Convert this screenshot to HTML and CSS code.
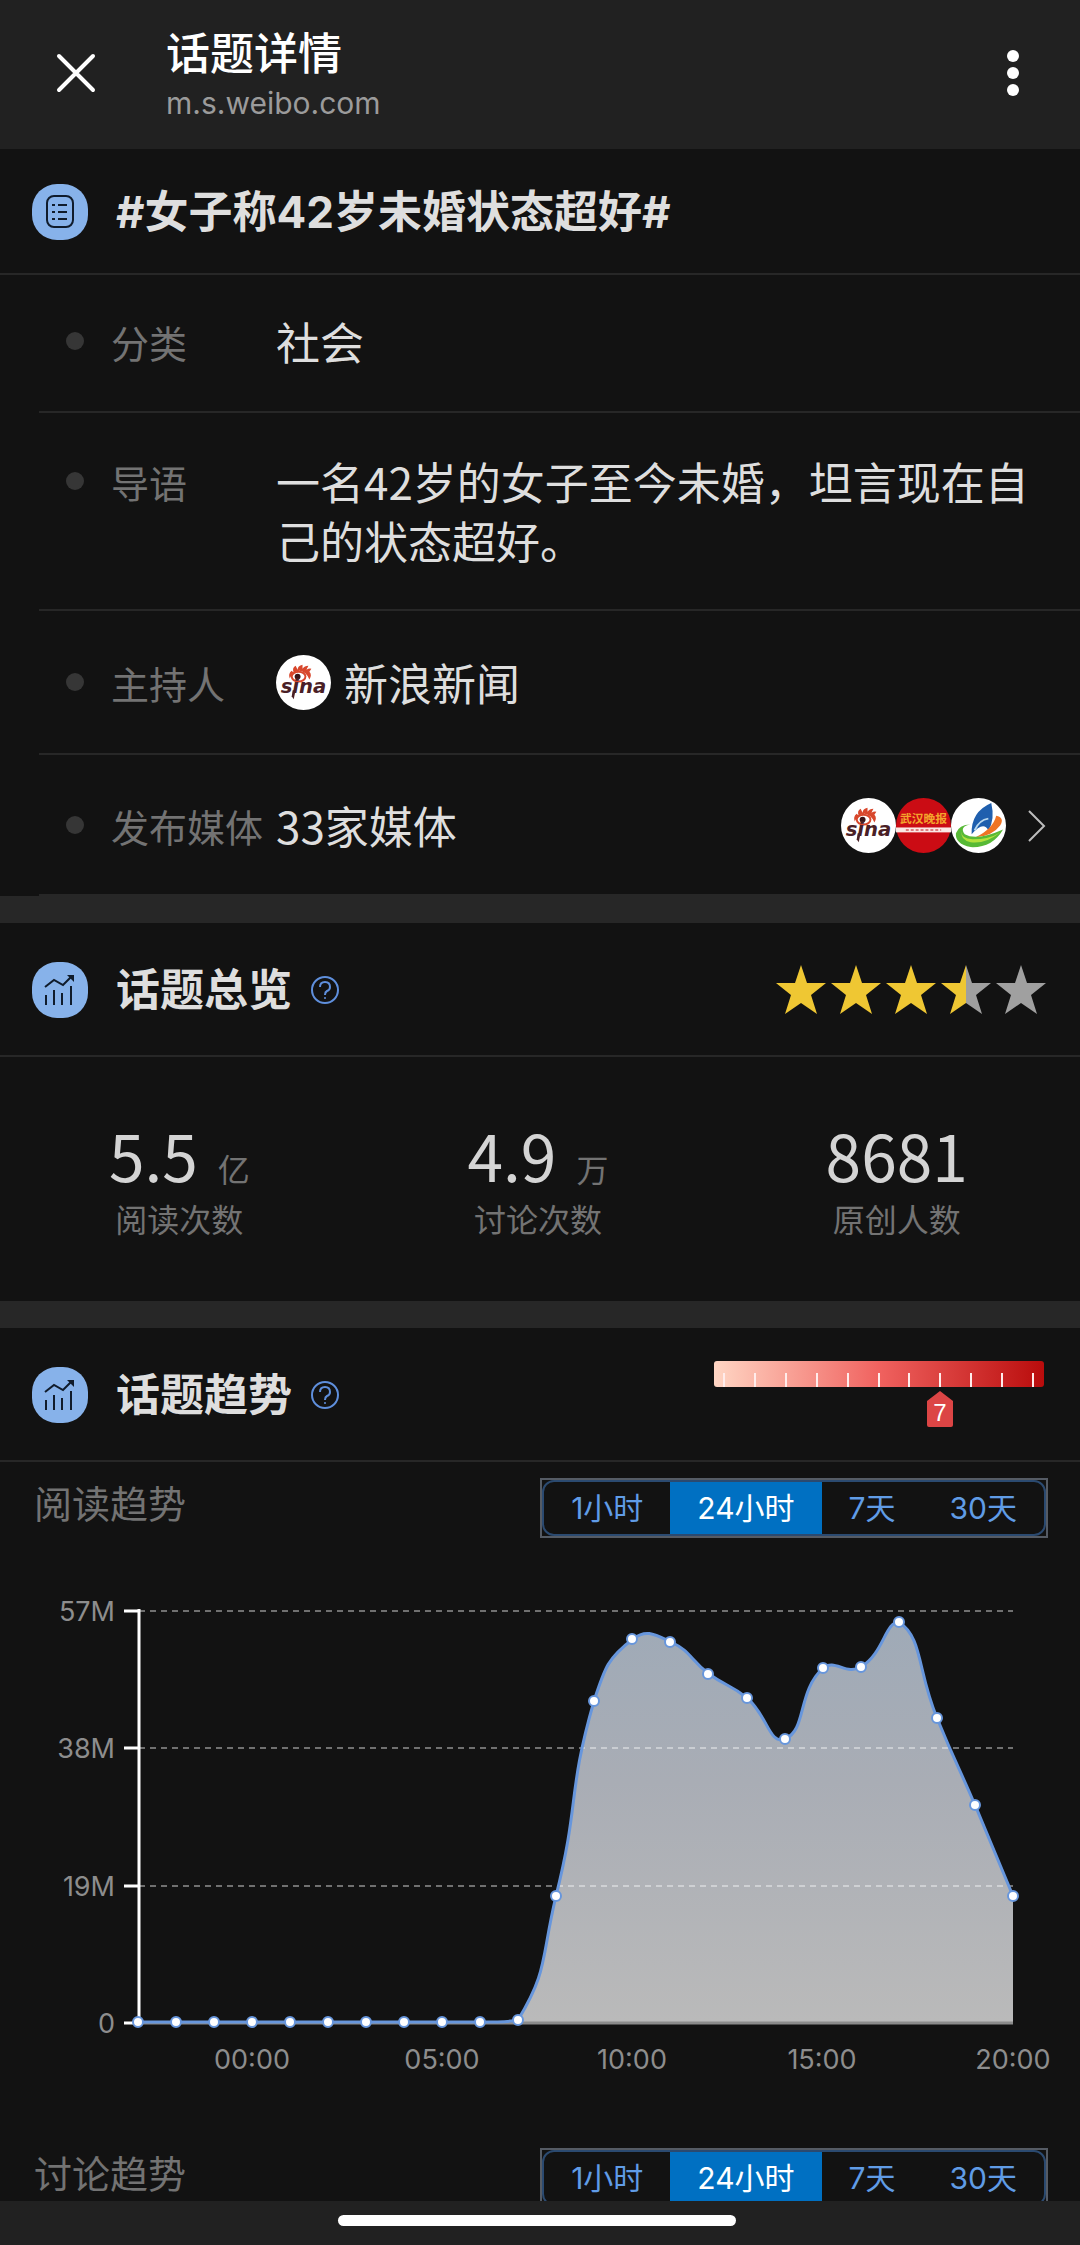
FILE: index.html
```html
<!DOCTYPE html>
<html lang="zh-CN">
<head>
<meta charset="utf-8">
<meta name="viewport" content="width=device-width, initial-scale=1">
<title>话题详情</title>
<link rel="stylesheet" href="styles.css">
</head>
<body>
<svg class="sprite" aria-hidden="true">
  <symbol id="sina" viewBox="0 0 56 56">
    <circle cx="28" cy="28" r="28" fill="#fff"/>
    <path d="M14 24 Q12 19 16 16 L18 18 Q16 13 20 11 L22 15 Q22 11 27 10 L27 14 Q29 11 33 11 L31 15 Q34 13 36 14 L34 17 Q37 20 34 25 Q31 17 24 16 Q17 17 14 24Z" fill="#d8472c"/>
    <ellipse cx="23" cy="22" rx="7" ry="5" fill="#fff" stroke="#d8472c" stroke-width="2"/>
    <circle cx="22" cy="22" r="3" fill="#3a1518"/>
    <text x="28" y="39" text-anchor="middle" class="sina-word">sina</text>
    <path d="M20 36 L18 45 L16 42 L17 36Z" fill="#4a2026"/>
  </symbol>
  <symbol id="trend" viewBox="0 0 56 56">
    <rect width="56" height="56" rx="25" fill="#87b2ea"/>
    <g fill="none" stroke="#101c2c" stroke-width="2">
      <path d="M13 25 L22 18 L31 23 L40 14"/>
      <path d="M14 33V43M22 28V43M30 31V43M39 24V43"/>
    </g>
    <path d="M35 13H42V20Z" fill="#101c2c"/>
  </symbol>
  <symbol id="help" viewBox="0 0 30 30">
    <circle cx="15" cy="15" r="13" fill="none" stroke="#5f8fdc" stroke-width="2"/>
    <path d="M10 12 Q10 7 15 7 Q20 7 20 12 Q20 15 17 16 Q15 17 15 20" fill="none" stroke="#5f8fdc" stroke-width="2"/>
    <circle cx="15" cy="23" r="1" fill="#5f8fdc"/>
  </symbol>
  <symbol id="star" viewBox="0 0 50 50">
    <path d="M25 0 L31 18 L50 18 L35 30 L41 49 L25 38 L9 49 L15 30 L0 18 L19 18Z"/>
  </symbol>
</svg>

<header class="topbar">
  <button class="icon-button" aria-label="关闭">
    <svg width="40" height="40" viewBox="0 0 40 40"><path d="M3 3 L37 37 M37 3 L3 37" stroke="#fff" stroke-width="4" stroke-linecap="round"/></svg>
  </button>
  <div class="topbar-text">
    <div class="topbar-title">话题详情</div>
    <div class="topbar-url">m.s.weibo.com</div>
  </div>
  <button class="icon-button" aria-label="更多">
    <svg width="14" height="46" viewBox="0 0 14 46" fill="#fff"><circle cx="7" cy="6" r="6"/><circle cx="7" cy="23" r="6"/><circle cx="7" cy="40" r="6"/></svg>
  </button>
</header>

<main class="content">
  <section>
    <div class="section-head section-head-first">
      <svg class="badge" viewBox="0 0 56 56" aria-hidden="true">
        <rect width="56" height="56" rx="25" fill="#87b2ea"/>
        <g fill="none" stroke="#101c2c" stroke-width="2">
          <rect x="15" y="12" width="26" height="31" rx="7"/>
          <path d="M26 21H35M26 28H35M26 35H35M20 21H23M20 28H23M20 35H23"/>
        </g>
      </svg>
      <h1 class="section-title">#女子称42岁未婚状态超好#</h1>
    </div>
    <dl class="details">
      <div class="row row-category">
        <dt>分类</dt><dd>社会</dd>
      </div>
      <div class="row row-intro">
        <dt>导语</dt><dd>一名42岁的女子至今未婚，坦言现在自己的状态超好。</dd>
      </div>
      <div class="row row-host">
        <dt>主持人</dt><dd class="host"><svg class="avatar" aria-hidden="true"><use href="#sina"/></svg>新浪新闻</dd>
      </div>
      <div class="row row-media">
        <dt>发布媒体</dt>
        <dd><a class="media" href="#media">33家媒体
          <span class="avatars">
            <svg class="avatar" aria-hidden="true"><use href="#sina"/></svg>
            <svg class="avatar" viewBox="0 0 56 56" aria-hidden="true">
              <circle cx="28" cy="28" r="28" fill="#cb0c14"/>
              <text x="28" y="25" text-anchor="middle" class="paper-name">武汉晚报</text>
              <rect x="0" y="30" width="56" height="5" fill="#fbe9e6"/>
              <path d="M10 32.500H46" stroke="#dc7f80" stroke-width="2" stroke-dasharray="3 2"/>
            </svg>
            <svg class="avatar" viewBox="0 0 56 56" aria-hidden="true">
              <circle cx="28" cy="28" r="28" fill="#fff"/>
              <path d="M21 37 Q20 14 41 5 Q45 22 38 33 Q33 23 21 37Z" fill="#1f5fae"/>
              <path d="M24 33 Q29 22 38 21" stroke="#b8d8ef" stroke-width="2" fill="none"/>
              <path d="M46 18 Q55 20 50 28 Q42 39 25 40 Q43 31 46 18Z" fill="#ee7425"/>
              <path d="M20 27 Q8 29 14 37 Q26 44 53 32 Q42 51 20 50 Q4 47 5 36 Q8 27 20 27Z" fill="#57b936"/>
              <path d="M11 34 Q10 41 22 42 Q39 42 50 35 Q35 47 20 45 Q9 42 11 34Z" fill="#b3e13d"/>
            </svg>
          </span>
          <svg class="chevron" width="18" height="34" viewBox="0 0 18 34" aria-hidden="true"><path d="M1 2 L16 17 L1 32" fill="none" stroke="#bdbdbd" stroke-width="2"/></svg>
        </a></dd>
      </div>
    </dl>
  </section>

  <section class="block">
    <div class="section-head">
      <svg class="badge" aria-hidden="true"><use href="#trend"/></svg>
      <h2 class="section-title">话题总览</h2>
      <button class="help" aria-label="话题总览说明"><svg width="30" height="30"><use href="#help"/></svg></button>
      <div class="stars" role="img" aria-label="3.5 星">
        <svg class="star"><use href="#star"/></svg>
        <svg class="star"><use href="#star"/></svg>
        <svg class="star"><use href="#star"/></svg>
        <svg class="star" viewBox="0 0 50 50"><path class="star-off" d="M25 0 L31 18 L50 18 L35 30 L41 49 L25 38Z"/><path d="M25 0 L19 18 L0 18 L15 30 L9 49 L25 38Z"/></svg>
        <svg class="star star-off"><use href="#star"/></svg>
      </div>
    </div>
    <div class="stats">
      <div class="stat"><div class="stat-value">5.5<span class="stat-unit">亿</span></div><div class="stat-label">阅读次数</div></div>
      <div class="stat"><div class="stat-value">4.9<span class="stat-unit">万</span></div><div class="stat-label">讨论次数</div></div>
      <div class="stat"><div class="stat-value">8681</div><div class="stat-label">原创人数</div></div>
    </div>
  </section>

  <section class="block">
    <div class="section-head">
      <svg class="badge" aria-hidden="true"><use href="#trend"/></svg>
      <h2 class="section-title">话题趋势</h2>
      <button class="help" aria-label="话题趋势说明"><svg width="30" height="30"><use href="#help"/></svg></button>
      <svg class="heat" width="330" height="68" viewBox="0 0 330 68" role="img" aria-label="热度 7">
        <defs><linearGradient id="heat-fill"><stop offset="0" stop-color="#ffd6c4"/><stop offset="0.5" stop-color="#f0625f"/><stop offset="1" stop-color="#b90c0c"/></linearGradient></defs>
        <rect width="330" height="26" rx="3" fill="url(#heat-fill)"/>
        <path d="M10 12V26M41 12V26M72 12V26M103 12V26M134 12V26M165 12V26M195 12V26M226 12V26M257 12V26M288 12V26M319 12V26" stroke="#ffeceb" stroke-width="2"/>
        <path d="M226 30 L239 40 V64 Q239 66 237 66 H215 Q213 66 213 64 V40Z" fill="#dc4545"/>
        <text x="226" y="60" text-anchor="middle" class="heat-value">7</text>
      </svg>
    </div>

    <div class="trend-head">
      <h3 class="trend-title">阅读趋势</h3>
      <div class="tabs"><div class="tabs-inner">
        <button class="tab">1小时</button><button class="tab tab-active">24小时</button><button class="tab">7天</button><button class="tab">30天</button>
      </div></div>
    </div>
    <svg class="chart" viewBox="0 1570 1080 562" role="img" aria-label="阅读趋势 24小时">
      <defs><linearGradient id="area-fill" x1="0" y1="0" x2="0" y2="1"><stop offset="0" stop-color="#9faab7"/><stop offset="0.4" stop-color="#a9adb5"/><stop offset="1" stop-color="#bababa"/></linearGradient></defs>
      <path d="M480 2022 C490 2022 510 2022 518 2020 C548 1971 541 1959 556 1896 C580 1800 567 1795 594 1701 C605 1667 608 1658 633 1639 C646 1629 654 1634 671 1642 C692 1652 689 1659 709 1674 C727 1687 730 1684 747 1698 C768 1716 769 1745 785 1739 C807 1730 797 1692 823 1668 C835 1658 846 1676 861 1667 C884 1653 885 1622 899 1622 C923 1638 917 1670 937 1718 C955 1762 956 1761 975 1805 C994 1850 1013 1896 1013 1896 V2022 Z" fill="url(#area-fill)"/>
      <path d="M139 1611H1013M139 1748H1013M139 1886H1013" class="grid"/>
      <path d="M139 2023H1013" stroke="#8b8b8b" stroke-width="3"/>
      <path d="M139 1609V2023M124 1611H140M124 1748H140M124 1886H140M124 2023H140" class="axis"/>
      <path d="M138 2022 H480 C490 2022 510 2022 518 2020 C548 1971 541 1959 556 1896 C580 1800 567 1795 594 1701 C605 1667 608 1658 633 1639 C646 1629 654 1634 671 1642 C692 1652 689 1659 709 1674 C727 1687 730 1684 747 1698 C768 1716 769 1745 785 1739 C807 1730 797 1692 823 1668 C835 1658 846 1676 861 1667 C884 1653 885 1622 899 1622 C923 1638 917 1670 937 1718 C955 1762 956 1761 975 1805 C994 1850 1013 1896 1013 1896" class="line"/>
      <g class="points">
        <circle cx="138" cy="2022" r="5"/><circle cx="176" cy="2022" r="5"/><circle cx="214" cy="2022" r="5"/><circle cx="252" cy="2022" r="5"/><circle cx="290" cy="2022" r="5"/><circle cx="328" cy="2022" r="5"/><circle cx="366" cy="2022" r="5"/><circle cx="404" cy="2022" r="5"/><circle cx="442" cy="2022" r="5"/><circle cx="480" cy="2022" r="5"/><circle cx="518" cy="2020" r="5"/><circle cx="556" cy="1896" r="5"/><circle cx="594" cy="1701" r="5"/><circle cx="632" cy="1639" r="5"/><circle cx="670" cy="1642" r="5"/><circle cx="708" cy="1674" r="5"/><circle cx="747" cy="1698" r="5"/><circle cx="785" cy="1739" r="5"/><circle cx="823" cy="1668" r="5"/><circle cx="861" cy="1667" r="5"/><circle cx="899" cy="1622" r="5"/><circle cx="937" cy="1718" r="5"/><circle cx="975" cy="1805" r="5"/><circle cx="1013" cy="1896" r="5"/>
      </g>
      <g class="ticks ticks-y"><text x="115" y="1621">57M</text><text x="115" y="1758">38M</text><text x="115" y="1896">19M</text><text x="115" y="2033">0</text></g>
      <g class="ticks ticks-x"><text x="252" y="2069">00:00</text><text x="442" y="2069">05:00</text><text x="632" y="2069">10:00</text><text x="822" y="2069">15:00</text><text x="1013" y="2069">20:00</text></g>
    </svg>

    <div class="trend-head">
      <h3 class="trend-title">讨论趋势</h3>
      <div class="tabs"><div class="tabs-inner">
        <button class="tab">1小时</button><button class="tab tab-active">24小时</button><button class="tab">7天</button><button class="tab">30天</button>
      </div></div>
    </div>
  </section>
</main>

<footer class="homebar"><div class="home-indicator"></div></footer>
</body>
</html>
```
FILE: styles.css
```css
* { box-sizing: border-box; margin: 0; padding: 0; }

body {
  display: flex;
  flex-direction: column;
  height: 100vh;
  background: #121212;
  color: #dedede;
  font-family: "Noto Sans CJK SC", sans-serif;
}

button { border: 0; background: none; font: inherit; color: inherit; }
a { color: inherit; text-decoration: none; }
.sprite { display: none; }

/* Browser bar */
.topbar {
  display: flex;
  align-items: center;
  flex: none;
  height: 149px;
  padding: 0 60px 4px 56px;
  background: #212121;
}
.icon-button { display: flex; }
.topbar-text { flex: 1; padding-left: 70px; }
.topbar-title { font-size: 44px; font-weight: 500; line-height: 60px; color: #fff; }
.topbar-url { font-family: Inter, sans-serif; font-size: 30px; line-height: 44px; color: #9b9b9b; }

.content { flex: 1; min-height: 0; overflow-y: auto; scrollbar-width: none; }
.block { border-top: 27px solid #272727; }

/* Section headings */
.section-head {
  display: flex;
  align-items: center;
  height: 134px;
  padding: 2px 34px 0 32px;
  border-bottom: 2px solid #272727;
}
.section-head-first { height: 126px; }
.badge { width: 56px; height: 56px; flex: none; }
.section-title {
  margin-left: 28px;
  font-family: Inter, "Noto Sans CJK SC", sans-serif;
  font-size: 44px;
  font-weight: 700;
  line-height: 64px;
}
.help { display: flex; margin-left: 18px; }

.stars { display: flex; gap: 5px; margin-left: auto; fill: #efc733; }
.star { width: 50px; height: 50px; }
.star-off { fill: #a0a0a0; }
.heat { margin-left: auto; margin-right: 2px; }
.heat-value { fill: #fff; font: 24px "Liberation Sans", sans-serif; }

/* Topic details */
.details { padding-left: 39px; }
.row {
  display: flex;
  padding-right: 34px;
  border-bottom: 2px solid #272727;
  font-size: 44px;
  line-height: 59px;
}
.row-category { padding-top: 37px; padding-bottom: 40px; }
.row-intro { padding-top: 39px; padding-bottom: 39px; }
.row-host { padding-top: 42px; padding-bottom: 41px; }
.row-media { padding-top: 41px; padding-bottom: 39px; }
.row dt {
  display: flex;
  align-items: center;
  flex: none;
  width: 237px;
  height: 58px;
  font-size: 38px;
  color: #737373;
  white-space: nowrap;
}
.row dt::before {
  content: "";
  width: 18px;
  height: 18px;
  margin: 0 27px;
  border-radius: 50%;
  background: #363636;
}
.row dd { flex: 1; }
.host, .media { display: flex; align-items: center; }
.host .avatar { margin-right: 13px; }
.avatar { width: 55px; height: 55px; }
.avatars { display: flex; margin-left: auto; }
.chevron { margin-left: 22px; }
.sina-word { font: italic bold 20px "DejaVu Sans", sans-serif; fill: #4a2026; }
.paper-name { font: bold 12px "Noto Sans CJK SC", sans-serif; fill: #f4a52c; }

/* Overview numbers */
.stats { display: grid; grid-template-columns: repeat(3, 1fr); padding: 64px 4px 60px 0; }
.stat { text-align: center; }
.stat-value { margin-bottom: 8px; font-size: 64px; line-height: 66px; color: #d4d4d4; }
.stat-unit { margin-left: 20px; font-size: 32px; line-height: 32px; color: #737373; }
.stat-label { font-size: 32px; line-height: 46px; color: #737373; }

/* Trend charts */
.trend-head {
  display: flex;
  align-items: flex-start;
  justify-content: space-between;
  padding: 16px 32px 0 34px;
}
.trend-title { font-size: 38px; font-weight: 400; line-height: 48px; color: #737373; }
.tabs { border: 2px solid #555b64; }
.tabs-inner {
  display: flex;
  height: 56px;
  overflow: hidden;
  border: 2px solid #2b4a70;
  border-radius: 12px;
}
.tab {
  padding: 0 27px;
  font-family: Inter, "Noto Sans CJK SC", sans-serif;
  font-size: 30px;
  line-height: 52px;
  color: #609ce6;
}
.tab-active { background: #0070c2; color: #fff; }

.chart { display: block; width: 100%; margin-top: 32px; }
.grid { stroke: #fff; stroke-opacity: 0.4; stroke-width: 2; stroke-dasharray: 6 5; }
.axis { stroke: #fff; stroke-width: 3; }
.line { fill: none; stroke: #6796dc; stroke-width: 3; }
.points { fill: #fff; stroke: #6796dc; stroke-width: 2; }
.ticks { font-family: Inter, sans-serif; font-size: 27px; fill: #8d8d8d; }
.ticks-y { text-anchor: end; }
.ticks-x { text-anchor: middle; }

/* System home bar */
.homebar {
  display: flex;
  justify-content: center;
  flex: none;
  height: 44px;
  padding: 14px 6px 0 0;
  background: #212121;
}
.home-indicator { width: 37%; height: 11px; border-radius: 6px; background: #fff; }
```
